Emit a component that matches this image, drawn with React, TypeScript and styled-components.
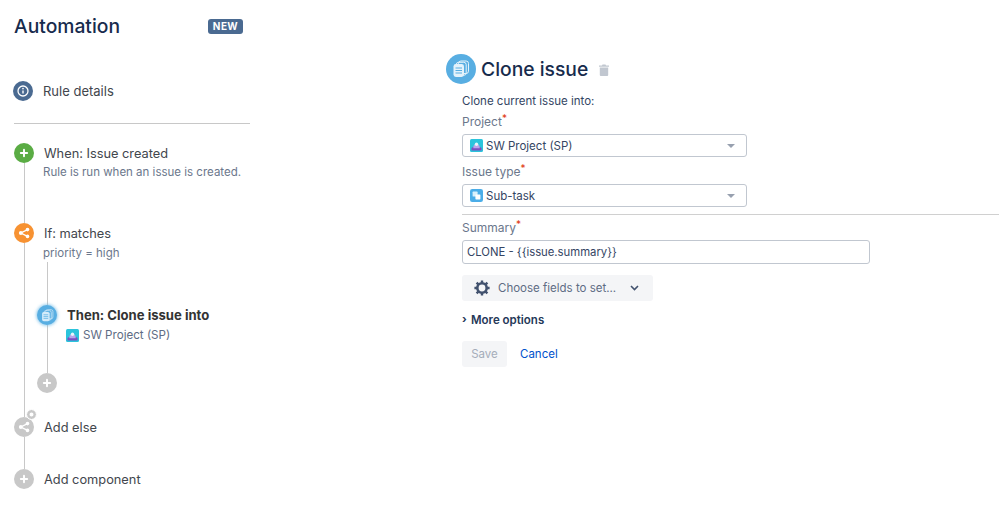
import React from "react";
import styled, { createGlobalStyle } from "styled-components";

const GlobalStyle = createGlobalStyle`
  html, body {
    margin: 0;
    padding: 0;
    background: #ffffff;
  }
  body {
    width: 999px;
    height: 509px;
    overflow: hidden;
    font-family: Inter, "Liberation Sans", sans-serif;
    color: #172b4d;
  }
`;

function PlusGlyph({ size = 10 }: { size?: number }) {
  return (
    <svg width={size} height={size} viewBox="0 0 10 10">
      <path d="M5 1.8v6.4M1.8 5h6.4" stroke="#fff" strokeWidth="1.9" strokeLinecap="round" />
    </svg>
  );
}

function BranchGlyph() {
  return (
    <svg width="12" height="12" viewBox="0 0 12 12">
      <path d="M9.5 2.6 2.8 6l6.7 3.4" fill="none" stroke="#fff" strokeWidth="1.3" />
      <circle cx="2.8" cy="6" r="1.9" fill="#fff" />
      <circle cx="9.5" cy="2.6" r="1.8" fill="#fff" />
      <circle cx="9.5" cy="9.4" r="1.8" fill="#fff" />
    </svg>
  );
}

function InfoGlyph() {
  return (
    <svg width="12" height="12" viewBox="0 0 12 12">
      <circle cx="6" cy="6" r="5" fill="none" stroke="#fff" strokeWidth="1.3" />
      <path d="M6 5.4v3" stroke="#fff" strokeWidth="1.4" />
      <circle cx="6" cy="3.6" r=".85" fill="#fff" />
    </svg>
  );
}

function CloneGlyph({ size, color }: { size: number; color: string }) {
  return (
    <svg width={size} height={size} viewBox="0 0 18 18">
      <rect x="6.5" y="1" width="10" height="12.5" rx="2.4" fill="none" stroke={color} strokeWidth="1" />
      <rect x="4.2" y="2.3" width="10" height="13" rx="2.4" fill="none" stroke={color} strokeWidth="1" />
      <rect x="1.5" y="4" width="10.5" height="13" rx="2.4" fill={color} />
      <path d="M3.5 8h6.5M3.5 10.5h6.5M3.5 13h6.5" stroke="#58aee2" strokeWidth="1" />
    </svg>
  );
}

function ProjectGlyph({ size }: { size: number }) {
  return (
    <svg width={size} height={size} viewBox="0 0 13 13">
      <rect width="13" height="13" rx="1.5" fill="#2bc4dc" />
      <path d="M1.5 11.5V9l2-1.2h6L11.5 9v2.5z" fill="#7a4fc0" />
      <path d="M3.3 8.5a3.2 3.2 0 1 1 6.4 0v.8H3.3z" fill="#b9a5ea" />
      <circle cx="6.5" cy="5.2" r="1.7" fill="#e8f5fb" />
    </svg>
  );
}

function SubTaskGlyph() {
  return (
    <svg width="13" height="13" viewBox="0 0 12 12">
      <rect width="12" height="12" rx="2" fill="#4bade8" />
      <rect x="2.4" y="2.4" width="4.6" height="4.6" rx=".6" fill="#d9f0fb" />
      <rect x="5" y="5" width="4.6" height="4.6" rx=".6" fill="#fff" />
    </svg>
  );
}

function TrashGlyph() {
  return (
    <svg width="10" height="12" viewBox="0 0 10 12">
      <path d="M3.5 0.6h3l.5 1H10v1.2H0V1.6h3zM.8 3.6h8.4V11a1 1 0 0 1-1 1H1.8a1 1 0 0 1-1-1z" fill="#c1c7d0" />
    </svg>
  );
}

function GearGlyph() {
  return (
    <svg width="16" height="16" viewBox="0 0 16 16">
      <circle cx="8" cy="8" r="4.7" fill="none" stroke="#42526e" strokeWidth="2.6" />
      <path
        d="M8 .4v2.8M8 12.8v2.8M.4 8h2.8M12.8 8h2.8M2.6 2.6l2 2M11.4 11.4l2 2M13.4 2.6l-2 2M4.6 11.4l-2 2"
        stroke="#42526e"
        strokeWidth="2.4"
      />
    </svg>
  );
}

function CaretGlyph({ color = "#42526e" }: { color?: string }) {
  return (
    <svg width="9" height="6" viewBox="0 0 9 6">
      <path d="M1 1l3.5 3.5L8 1" fill="none" stroke={color} strokeWidth="1.6" />
    </svg>
  );
}

export default function App() {
  return (
    <Page>
      <GlobalStyle />
      <Sidebar>
        <Header>
          <Title>Automation</Title>
          <NewBadge>NEW</NewBadge>
        </Header>
        <DetailsRow>
          <Node $color="#4a6a91">
            <InfoGlyph />
          </Node>
          <DetailsLabel>Rule details</DetailsLabel>
        </DetailsRow>
        <SideDivider />
        <Step $height={80}>
          <Rail>
            <Node $color="#5aac44">
              <PlusGlyph />
            </Node>
            <RailLine />
          </Rail>
          <StepBody>
            <StepTitle>When: Issue created</StepTitle>
            <StepNote>Rule is run when an issue is created.</StepNote>
          </StepBody>
        </Step>
        <Step $height={194}>
          <Rail>
            <Node $color="#f79232">
              <BranchGlyph />
            </Node>
            <RailLine />
          </Rail>
          <StepBody>
            <StepTitle>If: matches</StepTitle>
            <ConditionNote>priority = high</ConditionNote>
            <Nested>
              <NestedRail>
                <NestedLine $height={43} />
                <Node $color="#58aee2" $glow>
                  <CloneGlyph size={13} color="#d5ecfa" />
                </Node>
                <NestedLine $height={48} />
                <Node $color="#c8c8c8">
                  <PlusGlyph />
                </Node>
              </NestedRail>
              <ThenBody>
                <ThenTitle>Then: Clone issue into</ThenTitle>
                <ThenProject>
                  <ProjectGlyph size={13} />
                  SW Project (SP)
                </ThenProject>
              </ThenBody>
            </Nested>
          </StepBody>
        </Step>
        <Step $height={52}>
          <Rail>
            <Node $color="#c8c8c8">
              <BranchGlyph />
              <ElseBadge />
            </Node>
            <RailLine />
          </Rail>
          <StepBody>
            <StepTitle>Add else</StepTitle>
          </StepBody>
        </Step>
        <Step $height={20}>
          <Rail>
            <Node $color="#c8c8c8">
              <PlusGlyph />
            </Node>
          </Rail>
          <StepBody>
            <StepTitle>Add component</StepTitle>
          </StepBody>
        </Step>
      </Sidebar>
      <Main>
        <MainHeader>
          <HeaderIcon>
            <CloneGlyph size={18} color="#e3f2fb" />
          </HeaderIcon>
          <MainTitle>Clone issue</MainTitle>
          <TrashButton>
            <TrashGlyph />
          </TrashButton>
        </MainHeader>
        <Form>
          <Intro>Clone current issue into:</Intro>
          <FieldLabel $top={4}>
            Project<Required>*</Required>
          </FieldLabel>
          <Select>
            <SelectValue>
              <ProjectGlyph size={13} />
              SW Project (SP)
            </SelectValue>
            <SelectArrow />
          </Select>
          <FieldLabel $top={6}>
            Issue type<Required>*</Required>
          </FieldLabel>
          <Select>
            <SelectValue>
              <SubTaskGlyph />
              Sub-task
            </SelectValue>
            <SelectArrow />
          </Select>
          <FormDivider />
          <FieldLabel $top={4}>
            Summary<Required>*</Required>
          </FieldLabel>
          <SummaryInput readOnly value="CLONE - {{issue.summary}}" />
          <FieldsButton>
            <GearGlyph />
            <FieldsLabel>Choose fields to set...</FieldsLabel>
            <CaretGlyph />
          </FieldsButton>
          <MoreOptions>
            <MoreArrow>›</MoreArrow>
            More options
          </MoreOptions>
          <Actions>
            <SaveButton disabled>Save</SaveButton>
            <CancelLink>Cancel</CancelLink>
          </Actions>
        </Form>
      </Main>
    </Page>
  );
}

const Page = styled.div`
  display: flex;
  width: 999px;
  height: 509px;
  overflow: hidden;
`;

const Sidebar = styled.aside`
  width: 236px;
  margin-left: 14px;
  flex-shrink: 0;
  display: flex;
  flex-direction: column;
`;

const Header = styled.div`
  display: flex;
  align-items: center;
  justify-content: space-between;
  height: 24px;
  margin-top: 14px;
  padding-right: 7px;
`;

const Title = styled.h1`
  margin: 0;
  font-size: 19.3px;
  font-weight: 500;
  line-height: 24px;
  color: #172b4d;
`;

const NewBadge = styled.span`
  width: 35px;
  height: 15px;
  border-radius: 3px;
  background: #4a6a91;
  color: #fff;
  font-size: 10px;
  font-weight: 700;
  line-height: 15px;
  text-align: center;
  letter-spacing: 0.4px;
`;

const DetailsRow = styled.div`
  display: flex;
  align-items: center;
  gap: 10px;
  margin-top: 43px;
  margin-left: -1px;
`;

const DetailsLabel = styled.span`
  font-size: 13px;
  line-height: 20px;
  color: #42464d;
`;

const SideDivider = styled.div`
  height: 1px;
  background: #c8c8c8;
  margin: 22px 0 19px;
`;

const Step = styled.div<{ $height: number }>`
  display: flex;
  gap: 10px;
  height: ${(p) => p.$height}px;
  flex-shrink: 0;
`;

const Rail = styled.div`
  width: 20px;
  display: flex;
  flex-direction: column;
  align-items: center;
  flex-shrink: 0;
`;

const RailLine = styled.div`
  width: 1px;
  flex: 1;
  background: #c8c8c8;
`;

const Node = styled.div<{ $color: string; $glow?: boolean }>`
  position: relative;
  width: 20px;
  height: 20px;
  flex-shrink: 0;
  border-radius: 50%;
  background: ${(p) => p.$color};
  display: flex;
  align-items: center;
  justify-content: center;
  box-shadow: ${(p) => (p.$glow ? "0 0 3px 1px rgba(88, 174, 226, 0.55)" : "none")};
`;

const ElseBadge = styled.span`
  position: absolute;
  top: -8px;
  right: -3px;
  width: 9px;
  height: 9px;
  border-radius: 50%;
  background: #c8c8c8;
  border: 1px solid #fff;
  box-shadow: inset 0 0 0 2.5px #c8c8c8, inset 0 0 0 5px #fff;
`;

const StepBody = styled.div`
  min-width: 0;
  flex: 1;
`;

const StepTitle = styled.div`
  padding-top: 1px;
  font-size: 12.8px;
  line-height: 20px;
  color: #42464d;
`;

const StepNote = styled.div`
  font-size: 11.5px;
  line-height: 16px;
  margin-left: -1px;
  color: #6b778c;
  white-space: nowrap;
`;

const ConditionNote = styled(StepNote)`
  height: 17px;
  margin-top: 1px;
`;

const Nested = styled.div`
  display: flex;
  gap: 10px;
  margin-left: -7px;
`;

const NestedRail = styled.div`
  width: 20px;
  display: flex;
  flex-direction: column;
  align-items: center;
  flex-shrink: 0;
`;

const NestedLine = styled.div<{ $height: number }>`
  width: 1px;
  height: ${(p) => p.$height}px;
  background: #c8c8c8;
`;

const ThenBody = styled.div`
  padding-top: 43px;
`;

const ThenTitle = styled.div`
  font-size: 13.1px;
  font-weight: 700;
  line-height: 20px;
  color: #333333;
  white-space: nowrap;
`;

const ThenProject = styled.div`
  display: flex;
  align-items: center;
  gap: 4px;
  margin-left: -1px;
  font-size: 11.6px;
  line-height: 20px;
  color: #5e6c84;
  white-space: nowrap;
`;

const Main = styled.main`
  flex: 1;
  margin-left: 196px;
  min-width: 0;
`;

const MainHeader = styled.div`
  display: flex;
  align-items: center;
  height: 30px;
  margin-top: 54px;
`;

const HeaderIcon = styled.div`
  width: 30px;
  height: 30px;
  border-radius: 50%;
  background: #58aee2;
  display: flex;
  align-items: center;
  justify-content: center;
`;

const MainTitle = styled.h2`
  margin: 0 0 0 5px;
  font-size: 19.3px;
  font-weight: 500;
  line-height: 24px;
  color: #172b4d;
`;

const TrashButton = styled.span`
  display: flex;
  margin-left: 11px;
  margin-top: 2px;
`;

const Form = styled.div`
  margin-left: 16px;
  display: flex;
  flex-direction: column;
  align-items: flex-start;
`;

const Intro = styled.div`
  margin-top: 9px;
  font-size: 11.5px;
  line-height: 16px;
  color: #344563;
`;

const FieldLabel = styled.div<{ $top: number }>`
  margin-top: ${(p) => p.$top}px;
  margin-bottom: 4px;
  height: 17px;
  font-size: 12px;
  line-height: 17px;
  color: #6b778c;
`;

const Required = styled.sup`
  color: #de350b;
  font-size: 10px;
  line-height: 0;
  vertical-align: 4px;
`;

const Select = styled.div`
  box-sizing: border-box;
  width: 285px;
  height: 23px;
  padding: 0 11px 0 7px;
  display: flex;
  align-items: center;
  justify-content: space-between;
  background: #fff;
  border: 1px solid #c1c7d0;
  border-radius: 3px;
`;

const SelectValue = styled.span`
  display: flex;
  align-items: center;
  gap: 3px;
  font-size: 11.5px;
  color: #344563;
`;

const SelectArrow = styled.span`
  width: 0;
  height: 0;
  border-left: 4px solid transparent;
  border-right: 4px solid transparent;
  border-top: 4px solid #97a0af;
`;

const FormDivider = styled.div`
  width: 537px;
  height: 1px;
  margin-top: 7px;
  background: #d0d0d0;
`;

const SummaryInput = styled.input`
  box-sizing: border-box;
  width: 408px;
  height: 24px;
  margin: 0;
  padding: 0 4px;
  outline: none;
  background: #fff;
  border: 1px solid #c1c7d0;
  border-radius: 3px;
  font-family: Inter, "Liberation Sans", sans-serif;
  font-size: 11.3px;
  color: #344563;
`;

const FieldsButton = styled.button`
  box-sizing: border-box;
  width: 191px;
  height: 26px;
  margin-top: 11px;
  padding: 0 14px 0 12px;
  display: flex;
  align-items: center;
  border: 0;
  border-radius: 3px;
  background: #f4f5f7;
  font-family: Inter, "Liberation Sans", sans-serif;
`;

const FieldsLabel = styled.span`
  flex: 1;
  margin-left: 8px;
  text-align: left;
  font-size: 11.5px;
  color: #5e6c84;
`;

const MoreOptions = styled.div`
  display: flex;
  align-items: center;
  height: 18px;
  margin-top: 10px;
  font-size: 11.5px;
  font-weight: 600;
  color: #253858;
`;

const MoreArrow = styled.span`
  width: 9px;
  margin-top: -3px;
  font-size: 11px;
  font-weight: 700;
`;

const Actions = styled.div`
  display: flex;
  align-items: center;
  gap: 13px;
  margin-top: 12px;
`;

const SaveButton = styled.button`
  width: 45px;
  height: 26px;
  padding: 0;
  border: 0;
  border-radius: 3px;
  background: #f4f5f7;
  color: #a5adba;
  font-family: Inter, "Liberation Sans", sans-serif;
  font-size: 11.5px;
`;

const CancelLink = styled.a`
  font-size: 11.5px;
  color: #0052cc;
`;
